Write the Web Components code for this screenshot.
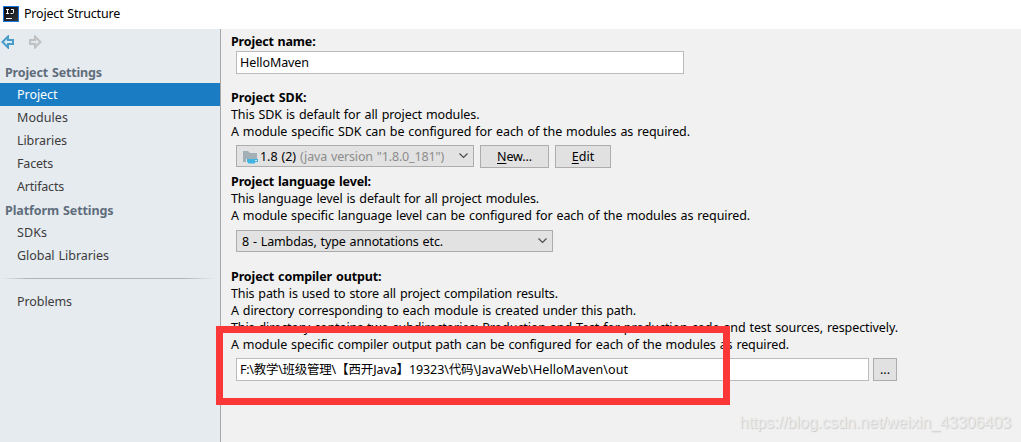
<!DOCTYPE html>
<html lang="en">
<head>
<meta charset="utf-8">
<title>Project Structure</title>
<style>
html,body{margin:0;height:100%;overflow:hidden;background:#f1f1f1}
body{font:12.5px/17px "Noto Sans","Noto Sans CJK SC",sans-serif;color:#000}
</style>
</head>
<body>
<project-structure></project-structure>
<script>
function define(name, html, setup) {
  const template = document.createElement('template');
  template.innerHTML = html;
  customElements.define(name, class extends HTMLElement {
    constructor() {
      super();
      this.attachShadow({ mode: 'open' }).append(template.content.cloneNode(true));
    }
    connectedCallback() { if (setup) setup.call(this, this.shadowRoot); }
  });
}

/* One line of text, tracked so that it spans the width given in "w". */
define('fit-text', `<style>
  :host{display:inline-block;white-space:pre;flex:none;word-spacing:.8px}
  span{display:inline-block}
</style><span><slot></slot></span>`, function (root) {
  const w = parseFloat(this.getAttribute('w'));
  const span = root.querySelector('span');
  const count = this.textContent.length;
  const natural = span.getBoundingClientRect().width;
  if (w && natural) {
    span.style.letterSpacing = ((w - natural) / count).toFixed(4) + 'px';
  }
});

define('title-bar', `<style>
  :host{display:flex;height:29px;background:#fff;box-sizing:border-box;padding:0 0 2px 3px;align-items:center;gap:5px}
  svg{display:block}
</style>
<svg width="16" height="16" viewBox="0 0 16 16">
  <defs><linearGradient id="g" x1="0" y1="0" x2="1" y2="1"><stop offset="0" stop-color="#08080c"/><stop offset="1" stop-color="#33363b"/></linearGradient></defs>
  <rect width="16" height="16" fill="#1a76e0"/><rect x="1" y="1" width="14" height="14" fill="url(#g)"/>
  <path d="M3 3.500h3M4.500 3.500v4M3 7.500h3M8 3.500h2.500V6.500q0 1-1 1H7.500" fill="none" stroke="#fff" stroke-width="1"/>
  <rect x="3" y="12" width="6" height="1" fill="#fff"/>
</svg><slot></slot>`);

define('nav-arrows', `<style>
  :host{display:flex;height:26px;padding:0 0 0 1px;gap:14px;align-items:center;box-sizing:border-box;margin-bottom:7px}
  svg{display:block}
</style>
<svg width="14" height="14" viewBox="0 0 14 14"><path d="M1.500 7 7 1.500V5H12v4H7v3.500z" fill="#dcebf4" stroke="#4a9cc8" stroke-width="2"/></svg>
<svg width="14" height="14" viewBox="0 0 14 14"><path d="M11.500 7 6 1.500V5H1v4H6v3.500z" fill="#e2e5e8" stroke="#bfc0c1" stroke-width="2"/></svg>`);

define('side-group', `<style>
  :host{display:flex;height:21px;padding:0 0 0 5px;align-items:center;font-weight:700;color:#5f6d7b;box-sizing:border-box}
  :host([tall]){height:23px;padding-top:1px}
</style><slot></slot>`);

define('side-item', `<style>
  :host{display:flex;height:23px;padding:0 0 0 17px;align-items:center;color:#3c3c3c;box-sizing:border-box}
  :host([selected]){background:#1a7dc4;color:#fff}
</style><slot></slot>`);

define('side-rule', `<style>
  :host{display:block;height:1px;margin:11px 5px 11px 2px;background:linear-gradient(90deg,transparent,#b1b4b6 12%,#b1b4b6 85%,transparent)}
</style>`);

define('side-bar', `<style>
  :host{display:block;width:220px;flex:none;background:#e6ebf0;border-right:1px solid #a8a8a8}
</style>
<nav-arrows></nav-arrows>
<side-group><fit-text w="97">Project Settings</fit-text></side-group>
<side-item selected><fit-text w="40.5">Project</fit-text></side-item>
<side-item><fit-text w="51">Modules</fit-text></side-item>
<side-item><fit-text w="50">Libraries</fit-text></side-item>
<side-item><fit-text w="36">Facets</fit-text></side-item>
<side-item><fit-text w="47">Artifacts</fit-text></side-item>
<side-group tall><fit-text w="108.500">Platform Settings</fit-text></side-group>
<side-item><fit-text w="30">SDKs</fit-text></side-item>
<side-item><fit-text w="92">Global Libraries</fit-text></side-item>
<side-rule></side-rule>
<side-item><fit-text w="55">Problems</fit-text></side-item>`);

define('text-row', `<style>
  :host{display:flex;height:17px;align-items:center}
  :host([bold]){font-weight:700}
</style><slot></slot>`);

define('text-field', `<style>
  :host{display:flex;height:23px;box-sizing:border-box;border:1px solid #bcbcbc;background:#fff;align-items:center;padding:0 0 0 3px;flex:none}
</style><slot></slot>`);

define('push-button', `<style>
  :host{display:flex;height:23px;box-sizing:border-box;border:1px solid #adadad;background:#e1e1e1;align-items:center;justify-content:center;flex:none}
</style><slot></slot>`);

define('combo-box', `<style>
  :host{display:flex;height:22px;box-sizing:border-box;border:1px solid #adadad;background:#e2e2e2;align-items:center;padding:0 4px 0 5px;flex:none}
  svg{margin-left:auto;display:block;flex:none}
</style><slot></slot>
<svg width="11" height="8" viewBox="0 0 11 8"><path d="M1.5 1.5 5.5 5.5 9.5 1.5" fill="none" stroke="#4c4c4c" stroke-width="1.2"/></svg>`);

define('sdk-icon', `<style>:host{display:block;width:17px;height:16px;flex:none;margin-top:1px}svg{display:block}</style>
<svg width="17" height="16" viewBox="0 0 17 16">
  <path d="M1 2h5l2 2h7v6H4v3H1z" fill="#a3afb7"/>
  <path d="M5 10h11v3h-2.500l-1 1.500h-6L5 12.500z" fill="#41b5e2"/>
  <path d="M13 11h2v1h-2z" fill="#e2e2e2"/>
</svg>`);

define('settings-form', `<style>
  :host{display:flex;flex-direction:column;flex:1;padding:4px 0 0 10px;box-sizing:border-box}
  .controls{display:flex;padding-left:5px}
  .muted{color:#8c8c8c;margin-left:4px}
  .mnemonic{text-decoration:underline;text-underline-offset:2px}
</style>
<text-row bold><fit-text w="84.5">Project name:</fit-text></text-row>
<div class="controls" style="padding-top:1px;padding-bottom:15px"><text-field style="width:448px"><fit-text w="69">HelloMaven</fit-text></text-field></div>
<text-row bold><fit-text w="75.500">Project SDK:</fit-text></text-row>
<text-row><fit-text w="248.500">This SDK is default for all project modules.</fit-text></text-row>
<text-row><fit-text w="459">A module specific SDK can be configured for each of the modules as required.</fit-text></text-row>
<div class="controls" style="padding-top:5px;padding-bottom:5px">
  <combo-box style="width:238px"><sdk-icon></sdk-icon><fit-text w="36" style="margin-left:1px">1.8 (2)</fit-text><fit-text class="muted" w="144">(java version "1.8.0_181")</fit-text></combo-box>
  <push-button style="width:69px;margin-left:6px"><fit-text w="35"><span class="mnemonic">N</span>ew...</fit-text></push-button>
  <push-button style="width:56px;margin-left:6px"><fit-text w="22.500"><span class="mnemonic">E</span>dit</fit-text></push-button>
</div>
<text-row bold><fit-text w="140">Project language level:</fit-text></text-row>
<text-row><fit-text w="308">This language level is default for all project modules.</fit-text></text-row>
<text-row><fit-text w="519">A module specific language level can be configured for each of the modules as required.</fit-text></text-row>
<div class="controls" style="padding-top:6px;padding-bottom:16px"><combo-box style="width:317px"><fit-text w="201">8 - Lambdas, type annotations etc.</fit-text></combo-box></div>
<text-row bold><fit-text w="150.500">Project compiler output:</fit-text></text-row>
<text-row><fit-text w="327">This path is used to store all project compilation results.</fit-text></text-row>
<text-row><fit-text w="405">A directory corresponding to each module is created under this path.</fit-text></text-row>
<text-row><fit-text w="667">This directory contains two subdirectories: Production and Test for production code and test sources, respectively.</fit-text></text-row>
<text-row><fit-text w="558">A module specific compiler output path can be configured for each of the modules as required.</fit-text></text-row>
<div class="controls" style="padding-top:5px">
  <text-field style="width:633px"><fit-text w="96">F:\\教学\\班级管理\\</fit-text><fit-text w="73">【西开Java】</fit-text><fit-text w="69">19323\\代码\\</fit-text><fit-text w="150">JavaWeb\\HelloMaven\\out</fit-text></text-field>
  <push-button style="width:24px;margin-left:4px"><fit-text w="10">...</fit-text></push-button>
</div>`);

define('highlight-frame', `<style>
  :host{position:absolute;left:216px;top:326px;width:514px;height:79px;box-sizing:border-box;border:7px solid #fc3737}
</style>`);

define('water-mark', `<style>
  :host{position:absolute;right:10px;bottom:9px;font:16px/20px "Liberation Sans",Arial,sans-serif;color:#ececec;text-shadow:1px 1px 1px #cacaca}
</style><slot></slot>`);

define('project-structure', `<style>
  :host{display:flex;flex-direction:column;position:relative;width:1021px;height:442px;background:#f1f1f1;overflow:hidden}
  main{display:flex;flex:1;min-height:0}
</style>
<title-bar><fit-text w="96">Project Structure</fit-text></title-bar>
<main><side-bar></side-bar><settings-form></settings-form></main>
<highlight-frame></highlight-frame>
<water-mark><fit-text w="271.500">https://blog.csdn.net/weixin_43306403</fit-text></water-mark>`);
</script>
</body>
</html>
